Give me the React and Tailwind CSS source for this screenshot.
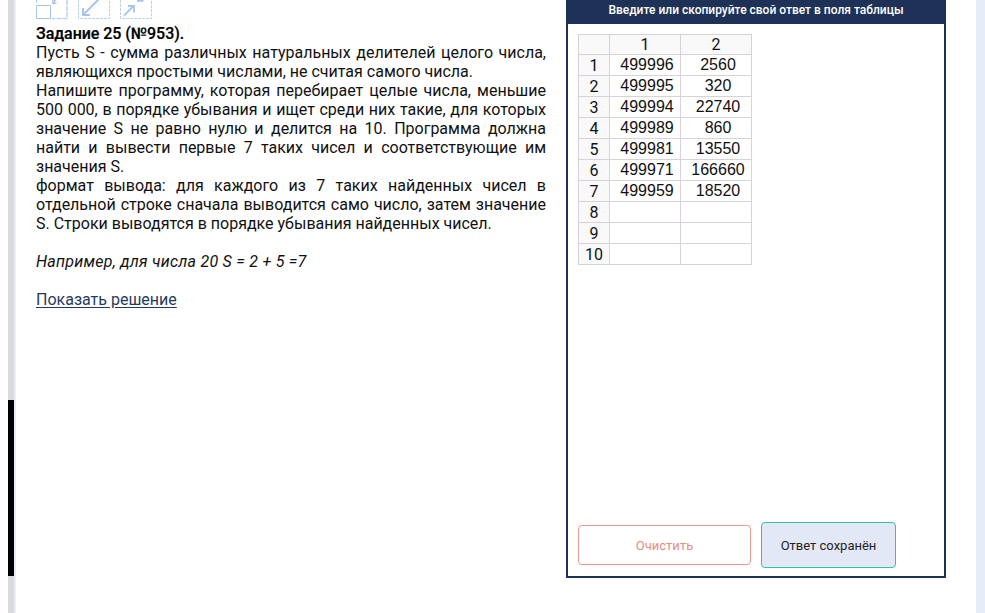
const rows = [
  ['499996', '2560'],
  ['499995', '320'],
  ['499994', '22740'],
  ['499989', '860'],
  ['499981', '13550'],
  ['499971', '166660'],
  ['499959', '18520'],
  ['', ''],
  ['', ''],
  ['', ''],
];

function SizeIcons() {
  return (
    <div className="flex h-5 gap-[10px] text-[#a9c5ee]">
      <svg width="32" height="20" viewBox="0 0 32 20" fill="none" stroke="currentColor">
        <path d="M.5 0V3M31 0V18.5H16" strokeDasharray="5 1" strokeWidth="1.5" opacity=".8" />
        <path d="M.5 5.5H14.5V18.5H.5Z" />
        <path d="M20.5 -1L17 3M17 0V3.2H20.5" strokeWidth="1.4" />
      </svg>
      <svg width="32" height="20" viewBox="0 0 32 20" fill="none" stroke="currentColor">
        <path d="M.5 0V18.5H31.5V0" strokeDasharray="3 1" opacity=".8" />
        <path d="M21 -1L5 15M5 8V15H12" strokeWidth="2" />
      </svg>
      <svg width="32" height="20" viewBox="0 0 32 20" fill="none" stroke="currentColor">
        <path d="M.5 0V18.5H31.5V0" strokeDasharray="3 1" opacity=".8" />
        <path d="M4 15.5L13.5 6M8 6H14V12.5" strokeWidth="1.8" />
        <path d="M17 .9H23.5" strokeWidth="1.8" />
      </svg>
    </div>
  );
}

function Task() {
  return (
    <section className="w-[510px] shrink-0 text-justify text-[16px] leading-[19px] text-[#111]">
      <SizeIcons />
      <div className="pt-1">
        <p className="font-medium tracking-[-0.05px] text-black [-webkit-text-stroke:0.2px_black]">Задание 25 (№953).</p>
        <p>Пусть S - сумма различных натуральных делителей целого числа, являющихся простыми числами, не считая самого числа.</p>
        <p>Напишите программу, которая перебирает целые числа, меньшие 500 000, в порядке убывания и ищет среди них такие, для которых значение S не равно нулю и делится на 10. Программа должна найти и вывести первые 7 таких чисел и соответствующие им значения S.</p>
        <p>формат вывода: для каждого из 7 таких найденных чисел в отдельной строке сначала выводится само число, затем значение S. Строки выводятся в порядке убывания найденных чисел.</p>
        <p className="mt-[19px] tracking-[0.26px] italic">Например, для числа 20 S = 2 + 5 =7</p>
        <a href="#solution" className="mt-[19px] inline-block text-[#1f3b61] underline underline-offset-2">Показать решение</a>
      </div>
    </section>
  );
}

function AnswerTable() {
  return (
    <div className="w-[174px] border-t border-l border-[#d9d1d9] text-center text-[16px] text-[#111]">
      <div className="grid grid-cols-[31px_71px_71px] grid-rows-[20px] bg-[#f9f9f9] leading-[19px]">
        <div className="border-r border-b border-[#d9d1d9]" />
        <div className="border-r border-b border-[#d9d1d9]">1</div>
        <div className="border-r border-b border-[#d9d1d9]">2</div>
      </div>
      {rows.map((row, i) => (
        <div key={i} className="grid grid-cols-[31px_71px_71px] grid-rows-[21px]">
          <div className="border-r border-b border-[#d9d1d9] bg-[#f9f9f9] leading-[22px]">{i + 1}</div>
          {row.map((value, j) => (
            <div key={j} className="border-r border-b border-[#d9d1d9] pl-1 font-['Liberation_Sans',sans-serif] leading-[19px]">{value}</div>
          ))}
        </div>
      ))}
    </div>
  );
}

export default function App() {
  return (
    <div className="flex h-[613px] w-[985px] overflow-hidden bg-white pl-2 font-[Roboto,sans-serif]">
      <div className="flex w-[6px] shrink-0 flex-col bg-[#dadada] pt-[400px]">
        <div className="h-[176px] bg-black" />
      </div>
      <div className="w-[2px] shrink-0 bg-[#e6ecfa]" />
      <main className="flex grow gap-5 pl-5">
        <Task />
        <section className="flex h-[578px] w-[380px] flex-col border-x-2 border-b-2 border-[#1e3157]">
          <h2 className="h-6 bg-[#1e3157] text-center text-[12px] leading-[20px] font-medium text-white">Введите или скопируйте свой ответ в поля таблицы</h2>
          <div className="flex grow flex-col justify-between px-[10px] pt-[10px] pb-2">
            <AnswerTable />
            <div className="flex items-center gap-[10px] text-[13px]">
              <button className="h-10 w-[173px] rounded-[4px] border border-[#e99a92] pt-px text-[#e58d85]">Очистить</button>
              <button className="h-[46px] w-[135px] rounded-[4px] border border-[#2fc5a0] bg-[#e2e8f5] pt-px text-[#222]">Ответ сохранён</button>
            </div>
          </div>
        </section>
      </main>
      <div className="w-[9px] shrink-0 bg-[#e6ecfa]" />
    </div>
  );
}
